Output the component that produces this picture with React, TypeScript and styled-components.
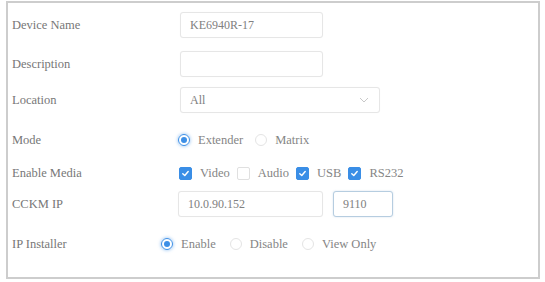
import React from "react";
import styled, { createGlobalStyle } from "styled-components";

const Global = createGlobalStyle`
  html, body { margin: 0; padding: 0; background: #ffffff; }
  body { font-family: "Liberation Serif", "Times New Roman", serif; }
  * { box-sizing: border-box; }
`;

const Frame = styled.div`
  margin: 1px 0 0 6px;
  width: 534px;
  height: 278px;
  border: 2px solid #cdcdcd;
  padding: 9px 0 0 4px;
  display: flex;
  flex-direction: column;
  background: #fff;
`;

const Row = styled.div<{ $mt: number }>`
  display: flex;
  align-items: center;
  height: 26px;
  margin-top: ${(p) => p.$mt}px;
`;

const Label = styled.div`
  width: 168px;
  flex: none;
  font-size: 12.5px;
  color: #777;
  white-space: nowrap;
`;

const Field = styled.div<{ $indent?: number; $gap?: number }>`
  display: flex;
  align-items: center;
  height: 100%;
  margin-left: ${(p) => p.$indent ?? 0}px;
  gap: ${(p) => p.$gap ?? 0}px;
`;

const TextBox = styled.div<{ $w: number; $focus?: boolean }>`
  width: ${(p) => p.$w}px;
  height: 26px;
  border: 1px solid ${(p) => (p.$focus ? "#b6cde0" : "#e6e6e6")};
  border-radius: 3px;
  box-shadow: ${(p) => (p.$focus ? "0 0 2px rgba(120,160,200,0.35)" : "0 0 1px rgba(0,0,0,0.05)")};
  display: flex;
  align-items: center;
  padding: 0 9px;
  font-size: 12px;
  color: #808080;
  background: #fff;
`;

const SelectBox = styled(TextBox)`
  justify-content: space-between;
  padding-right: 10px;
`;

const Option = styled.label<{ $lgap: number }>`
  display: flex;
  align-items: center;
  gap: ${(p) => p.$lgap}px;
  font-size: 12.5px;
  color: #858585;
  white-space: nowrap;
`;

const Radio = styled.span<{ $on?: boolean }>`
  width: 12px;
  height: 12px;
  border-radius: 50%;
  flex: none;
  border: 1px solid ${(p) => (p.$on ? "#3d8fe6" : "#e4e4e4")};
  box-shadow: ${(p) => (p.$on ? "0 0 3px 1px rgba(61,143,230,0.35)" : "none")};
  display: flex;
  align-items: center;
  justify-content: center;
  &::after {
    content: "";
    width: 6px;
    height: 6px;
    border-radius: 50%;
    background: ${(p) => (p.$on ? "#3d8fe6" : "transparent")};
  }
`;

const Check = styled.span<{ $on?: boolean }>`
  width: 13px;
  height: 13px;
  flex: none;
  border-radius: 2px;
  border: 1px solid ${(p) => (p.$on ? "#3a8ee6" : "#e0e0e0")};
  background: ${(p) => (p.$on ? "#3a8ee6" : "#fff")};
  display: flex;
  align-items: center;
  justify-content: center;
`;

const CheckMark = () => (
  <svg width="9" height="9" viewBox="0 0 10 10">
    <path d="M2 5.2 L4.2 7.2 L8 2.8" fill="none" stroke="#fff" strokeWidth="1.6" strokeLinecap="round" strokeLinejoin="round" />
  </svg>
);

const Chevron = () => (
  <svg width="10" height="6" viewBox="0 0 10 6">
    <path d="M1 1 L5 5 L9 1" fill="none" stroke="#c8c8c8" strokeWidth="1" />
  </svg>
);

const media = [
  { name: "Video", on: true },
  { name: "Audio", on: false },
  { name: "USB", on: true },
  { name: "RS232", on: true },
];

export default function App() {
  return (
    <>
      <Global />
      <Frame>
        <Row $mt={0}>
          <Label>Device Name</Label>
          <TextBox $w={143}>KE6940R-17</TextBox>
        </Row>
        <Row $mt={13}>
          <Label>Description</Label>
          <TextBox $w={143} />
        </Row>
        <Row $mt={10}>
          <Label>Location</Label>
          <SelectBox $w={200}>
            <span>All</span>
            <Chevron />
          </SelectBox>
        </Row>
        <Row $mt={14}>
          <Label>Mode</Label>
          <Field $indent={-2} $gap={12}>
            <Option $lgap={8}>
              <Radio $on />
              Extender
            </Option>
            <Option $lgap={8}>
              <Radio />
              Matrix
            </Option>
          </Field>
        </Row>
        <Row $mt={7}>
          <Label>Enable Media</Label>
          <Field $indent={-1} $gap={7}>
            {media.map((m) => (
              <Option key={m.name} $lgap={8}>
                <Check $on={m.on}>{m.on && <CheckMark />}</Check>
                {m.name}
              </Option>
            ))}
          </Field>
        </Row>
        <Row $mt={5}>
          <Label>CCKM IP</Label>
          <Field $indent={-2} $gap={10}>
            <TextBox $w={145}>10.0.90.152</TextBox>
            <TextBox $w={60} $focus>
              9110
            </TextBox>
          </Field>
        </Row>
        <Row $mt={14}>
          <Label>IP Installer</Label>
          <Field $indent={-19} $gap={14}>
            <Option $lgap={8}>
              <Radio $on />
              Enable
            </Option>
            <Option $lgap={8}>
              <Radio />
              Disable
            </Option>
            <Option $lgap={8}>
              <Radio />
              View Only
            </Option>
          </Field>
        </Row>
      </Frame>
    </>
  );
}
